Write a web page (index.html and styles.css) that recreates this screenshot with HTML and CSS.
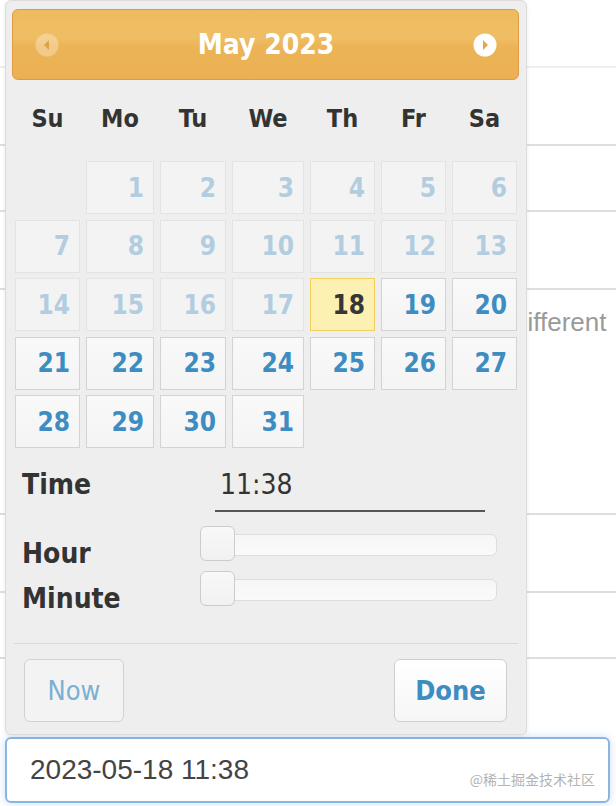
FILE: index.html
```html
<!DOCTYPE html>
<html>
<head>
<meta charset="utf-8">
<link rel="stylesheet" href="styles.css">
</head>
<body>
<div class="page">
  <div class="row r1 faint"></div>
  <div class="row r2"></div>
  <div class="row r3"></div>
  <div class="row r4"></div>
  <div class="row r5"><span class="hint">different</span></div>
  <div class="row r6"></div>
  <div class="row r7"></div>
  <div class="row r8 noline"></div>
  <div class="field">
    <span class="field-value">2023-05-18 11:38</span>
    <span class="watermark">@稀土掘金技术社区</span>
  </div>

  <div class="picker">
    <div class="picker-header">
      <svg class="nav nav-prev" width="24" height="24" viewBox="0 0 24 24"><circle cx="12" cy="12" r="11.5" fill="#fff"/><polygon points="14,7 9,12 14,17" fill="#b97a1c"/></svg>
      <div class="picker-title">May 2023</div>
      <svg class="nav nav-next" width="24" height="24" viewBox="0 0 24 24"><circle cx="12" cy="12" r="11.5" fill="#fff"/><polygon points="10,7 15,12 10,17" fill="#e9a645"/></svg>
    </div>
    <div class="weekdays">
      <span>Su</span><span>Mo</span><span>Tu</span><span>We</span><span>Th</span><span>Fr</span><span>Sa</span>
    </div>
    <div class="days">
      <span class="empty"></span>
      <span class="day off">1</span><span class="day off">2</span><span class="day off">3</span><span class="day off">4</span><span class="day off">5</span><span class="day off">6</span>
      <span class="day off">7</span><span class="day off">8</span><span class="day off">9</span><span class="day off">10</span><span class="day off">11</span><span class="day off">12</span><span class="day off">13</span>
      <span class="day off">14</span><span class="day off">15</span><span class="day off">16</span><span class="day off">17</span><span class="day today">18</span><span class="day">19</span><span class="day">20</span>
      <span class="day">21</span><span class="day">22</span><span class="day">23</span><span class="day">24</span><span class="day">25</span><span class="day">26</span><span class="day">27</span>
      <span class="day">28</span><span class="day">29</span><span class="day">30</span><span class="day">31</span>
    </div>
    <div class="time-row">
      <span class="t-label">Time</span>
      <span class="time-value">11:38</span>
    </div>
    <div class="slider-row">
      <span class="s-label">Hour</span>
      <div class="slider"><div class="track"></div><div class="handle"></div></div>
    </div>
    <div class="slider-row">
      <span class="s-label">Minute</span>
      <div class="slider"><div class="track"></div><div class="handle"></div></div>
    </div>
    <div class="sep"></div>
    <div class="buttons">
      <button class="btn btn-now">Now</button>
      <button class="btn btn-done">Done</button>
    </div>
  </div>
</div>
</body>
</html>
```
FILE: styles.css
```css
html, body {
  margin: 0;
  padding: 0;
  background: #fff;
}
.page {
  position: relative;
  width: 616px;
  height: 806px;
  overflow: hidden;
  font-family: "Liberation Sans", Arial, sans-serif;
}
.row {
  box-sizing: border-box;
  border-bottom: 2px solid #dedede;
}
.row.faint { border-bottom-color: #eeeeee; }
.row.noline { border-bottom: none; }
.r1 { height: 68px; }
.r2 { height: 78px; }
.r3 { height: 66px; }
.r4 { height: 78px; }
.r5 { height: 225px; padding: 17px 0 0 513px; }
.r6 { height: 78px; }
.r7 { height: 66px; }
.r8 { height: 78px; }
.hint {
  font-size: 26px;
  line-height: 30px;
  color: #9a9a9a;
  white-space: nowrap;
}
.field {
  position: relative;
  box-sizing: border-box;
  margin: 0 6px 0 5px;
  height: 66px;
  border: 2px solid #8ab5e3;
  border-radius: 6px;
  box-shadow: 0 0 8px rgba(110, 165, 230, 0.35);
  background: #fff;
  padding-left: 23px;
  display: flex;
  align-items: center;
}
.field-value {
  font-size: 28px;
  color: #444;
}
.watermark {
  position: absolute;
  right: 13px;
  bottom: 14px;
  font-family: "Noto Sans CJK SC", "Liberation Sans", sans-serif;
  font-size: 14px;
  line-height: 16px;
  color: #b4b4b4;
}

/* picker */
.picker {
  position: absolute;
  top: 0;
  left: 5px;
  width: 522px;
  box-sizing: border-box;
  background: #eeeeee;
  border: 1px solid #dcdcdc;
  border-radius: 6px;
  padding: 8px 7px 12px 6px;
  box-shadow: 0 1px 4px rgba(0,0,0,0.08);
  font-family: "DejaVu Sans Condensed", "DejaVu Sans", sans-serif;
  color: #333;
}
.picker-header {
  box-sizing: border-box;
  height: 71px;
  border: 1px solid #df9b44;
  border-radius: 6px;
  background: linear-gradient(#eebb5f 0%, #efbe64 40%, #ecb457 52%, #ebb052 100%);
  display: flex;
  align-items: center;
  padding: 0 21px 0 22px;
}
.nav { flex: none; }
.nav-prev { opacity: 0.3; }
.picker-title {
  flex: 1;
  text-align: center;
  color: #fff;
  font-weight: bold;
  font-size: 28px;
}
.weekdays {
  display: grid;
  grid-template-columns: 65px 68px 66px 72px 65px 65px 65px;
  column-gap: 6px;
  margin: 0 2px 5px 3px;
  height: 76px;
  align-items: center;
  text-align: center;
  font-weight: bold;
  font-size: 25px;
  color: #333;
}
.days {
  display: grid;
  grid-template-columns: 65px 68px 66px 72px 65px 65px 65px;
  grid-auto-rows: 53px;
  column-gap: 6px;
  row-gap: 5.5px;
  margin: 0 2px 0 3px;
}
.day {
  box-sizing: border-box;
  border: 1px solid #d3d3d3;
  background: linear-gradient(#f9f9f9, #f4f4f4);
  display: flex;
  align-items: center;
  justify-content: flex-end;
  padding-right: 9px;
  font-weight: bold;
  font-size: 26px;
  color: #3d8dc2;
}
.day.off {
  border-color: #e3e3e3;
  background: #f3f3f3;
  color: #b2cde0;
}
.day.today {
  border-color: #f3cf5c;
  background: #fcf0b3;
  color: #363636;
}
.time-row {
  display: flex;
  margin-top: 12px;
  padding-left: 10px;
  height: 52px;
}
.t-label, .s-label {
  width: 178px;
  flex: none;
  font-weight: bold;
  font-size: 28px;
  color: #333;
}
.t-label { line-height: 50px; }
.time-value {
  margin-left: 15px;
  width: 270px;
  box-sizing: border-box;
  padding-left: 5px;
  line-height: 50px;
  height: 52px;
  border-bottom: 2px solid #555;
  font-size: 28px;
  color: #333;
}
.slider-row {
  display: flex;
  padding-left: 10px;
  height: 45px;
}
.time-row + .slider-row { margin-top: 14px; }
.s-label {
  line-height: 35px;
  margin-top: 10px;
}
.slider {
  position: relative;
  width: 297px;
  height: 35px;
}
.track {
  margin-top: 8px;
  box-sizing: border-box;
  height: 22px;
  border: 1px solid #dddddd;
  border-radius: 6px;
  background: linear-gradient(#f6f6f6, #fafafa);
}
.handle {
  position: absolute;
  left: 0;
  top: 0;
  box-sizing: border-box;
  width: 35px;
  height: 35px;
  border: 1px solid #cccccc;
  border-radius: 6px;
  background: linear-gradient(#f8f8f8, #f1f1f1);
}
.sep {
  margin: 27px 1px 0 2px;
  height: 1px;
  background: #d8d8d8;
}
.buttons {
  display: flex;
  justify-content: space-between;
  margin-top: 15px;
  padding: 0 12px 0 12px;
}
.btn {
  box-sizing: border-box;
  height: 63px;
  border: 1px solid #d2d2d2;
  border-radius: 6px;
  font-family: "DejaVu Sans Condensed", "DejaVu Sans", sans-serif;
  font-size: 27px;
  padding: 0;
  margin: 0;
}
.btn-now {
  width: 100px;
  background: #f3f3f3;
  color: #7ab0d3;
  font-weight: normal;
}
.btn-done {
  width: 113px;
  background: linear-gradient(#ffffff, #f6f6f6);
  border-color: #cfcfcf;
  color: #3d8dc2;
  font-weight: bold;
}
```
